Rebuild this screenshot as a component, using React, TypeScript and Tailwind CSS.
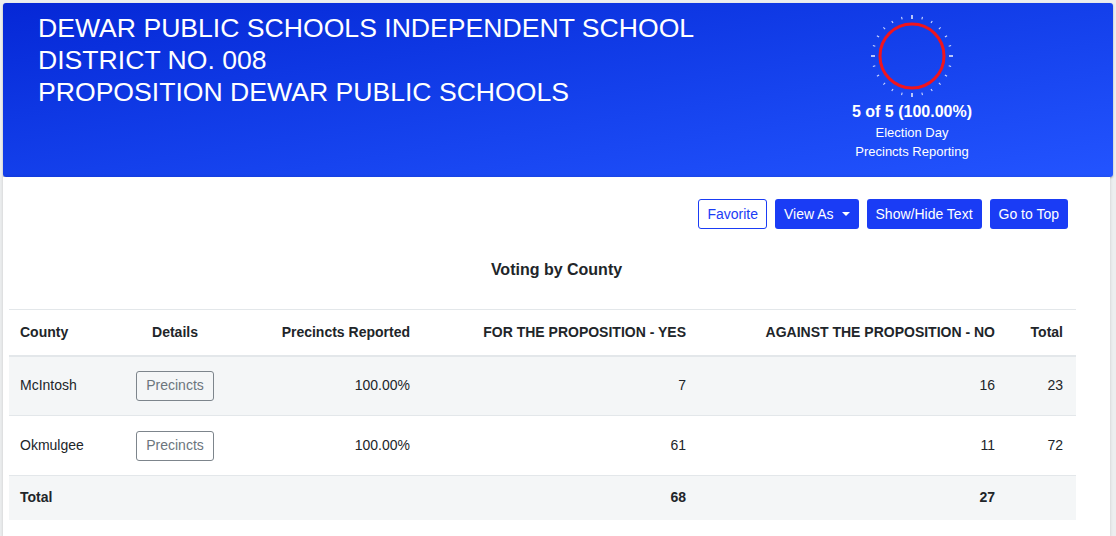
import React from "react";

const rows = [
  { county: "McIntosh", pct: "100.00%", yes: 7, no: 16, total: 23 },
  { county: "Okmulgee", pct: "100.00%", yes: 61, no: 11, total: 72 },
];

function Gauge() {
  const ticks = Array.from({ length: 24 }, (_, i) => i * 15);
  return (
    <svg width="84" height="84" viewBox="0 0 84 84">
      {ticks.map((a) => {
        const major = a % 90 === 0;
        const r1 = major ? 37 : 38;
        const r2 = major ? 41 : 40.5;
        const rad = (a * Math.PI) / 180;
        return (
          <line
            key={a}
            x1={42 + r1 * Math.sin(rad)}
            y1={42 - r1 * Math.cos(rad)}
            x2={42 + r2 * Math.sin(rad)}
            y2={42 - r2 * Math.cos(rad)}
            stroke={major ? "#ffffff" : "#d0daff"}
            strokeWidth={major ? 1.4 : 1.1}
          />
        );
      })}
      <circle cx="42" cy="42" r="32" fill="none" stroke="#f0141e" strokeWidth="3" />
    </svg>
  );
}

export default function App() {
  return (
    <div className="min-h-screen bg-[#eceeef] px-[3px] pt-[3px] font-['Liberation_Sans',Arial,sans-serif]">
      <div className="flex h-[174px] rounded-[3px] bg-gradient-to-br from-[#0627d6] to-[#2354ff] text-white shadow-[0_1px_2px_rgba(0,0,0,0.3)]">
        <div className="w-[800px] pl-[35px] pt-[9px]">
          <h1 className="text-[26.6px] leading-[32px]">
            DEWAR PUBLIC SCHOOLS INDEPENDENT SCHOOL
            <br />
            DISTRICT NO. 008
            <br />
            PROPOSITION DEWAR PUBLIC SCHOOLS
          </h1>
        </div>
        <div className="flex w-[218px] flex-col items-center pt-[11px]">
          <Gauge />
          <div className="mt-[5px] text-[16px] font-bold leading-[18px]">5 of 5 (100.00%)</div>
          <div className="mt-[2px] text-[13px] leading-[19px]">Election Day</div>
          <div className="text-[13px] leading-[19px]">Precincts Reporting</div>
        </div>
      </div>

      <div className="mr-[3px] min-h-[360px] bg-white shadow-[0_0_3px_rgba(0,0,0,0.15)]">
        <div className="flex justify-end gap-[8px] pr-[42px] pt-[22px]">
          <button className="h-[30px] rounded-[3px] border border-[#1a3cf5] px-[8px] text-[14px] text-[#1a3cf5]">
            Favorite
          </button>
          <button className="flex h-[30px] items-center rounded-[3px] bg-[#1a3cf5] px-[9px] text-[14px] text-white">
            View As
            <span className="ml-[8px] inline-block h-0 w-0 border-x-[4px] border-t-[4px] border-x-transparent border-t-white" />
          </button>
          <button className="h-[30px] rounded-[3px] bg-[#1a3cf5] px-[9px] text-[14px] text-white">
            Show/Hide Text
          </button>
          <button className="h-[30px] rounded-[3px] bg-[#1a3cf5] px-[9px] text-[14px] text-white">
            Go to Top
          </button>
        </div>

        <h2 className="mt-[31px] text-center text-[16px] font-bold leading-[20px] text-[#212529]">
          Voting by County
        </h2>

        <div className="mt-[29px] pl-[6px] pr-[34px]">
          <table className="w-full border-collapse text-[14px] text-[#212529]">
            <thead>
              <tr className="h-[46px] border-t border-b-2 border-[#e3e7ea]">
                <th className="w-[110px] pl-[11px] text-left font-bold">County</th>
                <th className="w-[112px] text-center font-bold">Details</th>
                <th className="w-[179px] text-right font-bold">Precincts Reported</th>
                <th className="w-[276px] text-right font-bold">FOR THE PROPOSITION - YES</th>
                <th className="w-[309px] text-right font-bold">AGAINST THE PROPOSITION - NO</th>
                <th className="pr-[13px] text-right font-bold">Total</th>
              </tr>
            </thead>
            <tbody>
              {rows.map((r, i) => (
                <tr
                  key={r.county}
                  className={`h-[60px] border-b border-[#e3e7ea] ${i % 2 === 0 ? "bg-[#f4f6f7]" : "bg-white"}`}
                >
                  <td className="pl-[11px]">{r.county}</td>
                  <td className="text-center">
                    <button className="h-[30px] rounded-[3px] border border-[#7d858c] px-[9px] text-[14px] text-[#6c757d]">
                      Precincts
                    </button>
                  </td>
                  <td className="text-right">{r.pct}</td>
                  <td className="text-right">{r.yes}</td>
                  <td className="text-right">{r.no}</td>
                  <td className="pr-[13px] text-right">{r.total}</td>
                </tr>
              ))}
              <tr className="h-[44px] bg-[#f4f6f7] font-bold">
                <td className="pl-[11px]">Total</td>
                <td />
                <td />
                <td className="text-right">68</td>
                <td className="text-right">27</td>
                <td className="pr-[13px]" />
              </tr>
            </tbody>
          </table>
        </div>
      </div>
    </div>
  );
}
